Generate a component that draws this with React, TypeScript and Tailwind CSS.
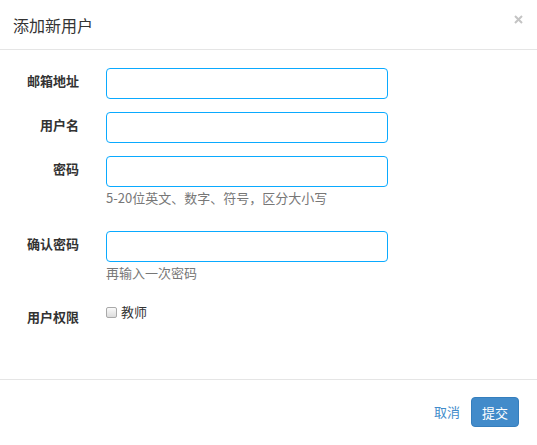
import React from "react";

const font = { fontFamily: '"Noto Sans CJK SC", "Noto Sans", sans-serif' };

function Row({ label, help, first, mt, children }: { label: string; help?: string; first?: boolean; mt?: string; children?: React.ReactNode }) {
  return (
    <div className={`flex ${mt ?? (first ? "" : "mt-[13px]")}`}>
      <div className="w-[79px] shrink-0 text-right text-[13px] leading-[20px] pt-[3px] font-bold text-[#333]">{label}</div>
      <div className="ml-[27px] flex flex-col">
        {children ?? <input className="w-[282px] h-[31px] border border-[#0aaaff] rounded-[4px] outline-none px-2" />}
        {help && <div className="mt-[2px] text-[13px] leading-[18px] text-[#777]">{help}</div>}
      </div>
    </div>
  );
}

export default function App() {
  return (
    <div style={font} className="w-[537px] h-[445px] bg-white text-[#333] overflow-hidden">
      <div className="h-[50px] border-b border-[#e5e5e5] flex items-center justify-between pl-[13px] pr-[13px]">
        <div className="text-[16px] leading-[20px] text-[#333]">添加新用户</div>
        <svg width="9" height="9" viewBox="0 0 9 9" className="mr-[1px] mt-[-10px]">
          <path d="M1 1 L8 8 M8 1 L1 8" stroke="#c4c4c4" strokeWidth="2" />
        </svg>
      </div>
      <div className="h-[329px] pt-[18px]">
        <Row label="邮箱地址" first />
        <Row label="用户名" />
        <Row label="密码" help="5-20位英文、数字、符号，区分大小写" />
        <Row label="确认密码" help="再输入一次密码" mt="mt-[24px]" />
        <div className="flex mt-[21px]">
          <div className="w-[79px] shrink-0 text-right text-[13px] leading-[20px] pt-[4px] font-bold text-[#333]">用户权限</div>
          <div className="ml-[27px] flex items-center h-[18px]">
            <span className="w-[11px] h-[11px] border border-[#a9a9a9] rounded-[2px] bg-gradient-to-b from-[#fafafa] to-[#dcdcdc] mt-[1px]" />
            <span className="ml-[4px] text-[13px] leading-[18px] text-[#333]">教师</span>
          </div>
        </div>
      </div>
      <div className="border-t border-[#e5e5e5] pt-[17px] pr-[18px] flex justify-end items-center">
        <span className="text-[13px] text-[#428bca] mr-[11px]">取消</span>
        <button className="w-[48px] h-[30px] rounded-[4px] bg-[#428bca] border border-[#357ebd] text-white text-[13px] leading-none">提交</button>
      </div>
    </div>
  );
}
